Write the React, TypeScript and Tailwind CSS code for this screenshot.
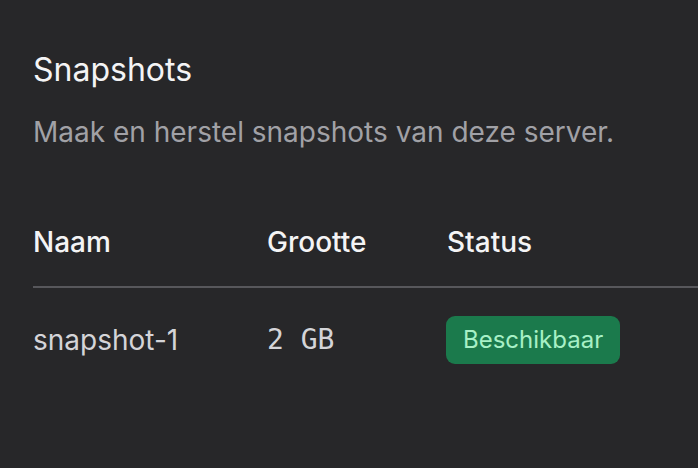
export default function App() {
  const rows = [{ name: 'snapshot-1', size: '2 GB', status: 'Beschikbaar' }]

  return (
    <div className="w-[698px] h-[468px] overflow-hidden bg-[#272729] font-['Inter',sans-serif]">
      <div className="pl-[33px] pt-[50px]">
        <h2 className="text-[32px] leading-[40px] font-normal text-[#f4f4f5]">Snapshots</h2>
        <p className="mt-[24px] text-[28px] leading-[36px] text-[#a1a1a6]">Maak en herstel snapshots van deze server.</p>

        <div className="mt-[70px] w-[760px]">
          <div className="grid grid-cols-[234px_180px_1fr] h-[68px] pt-[4px] items-start border-b-2 border-[#57575b]">
            <span className="text-[28px] leading-[36px] font-medium text-[#f4f4f5]">Naam</span>
            <span className="text-[28px] leading-[36px] font-medium text-[#f4f4f5]">Grootte</span>
            <span className="text-[28px] leading-[36px] font-medium text-[#f4f4f5]">Status</span>
          </div>
          {rows.map(r => (
            <div key={r.name} className="grid grid-cols-[234px_180px_1fr] h-[104px] items-center">
              <span className="text-[28px] text-[#d4d4d8]">{r.name}</span>
              <span className="text-[28px] text-[#d4d4d8] font-['DejaVu_Sans_Mono',monospace]">{r.size}</span>
              <span>
                <span className="inline-flex items-center h-[48px] px-[17px] rounded-[9px] bg-[#1b7a4c] text-[24px] text-[#a7f0c6] -ml-[1px]">
                  {r.status}
                </span>
              </span>
            </div>
          ))}
        </div>
      </div>
    </div>
  )
}
